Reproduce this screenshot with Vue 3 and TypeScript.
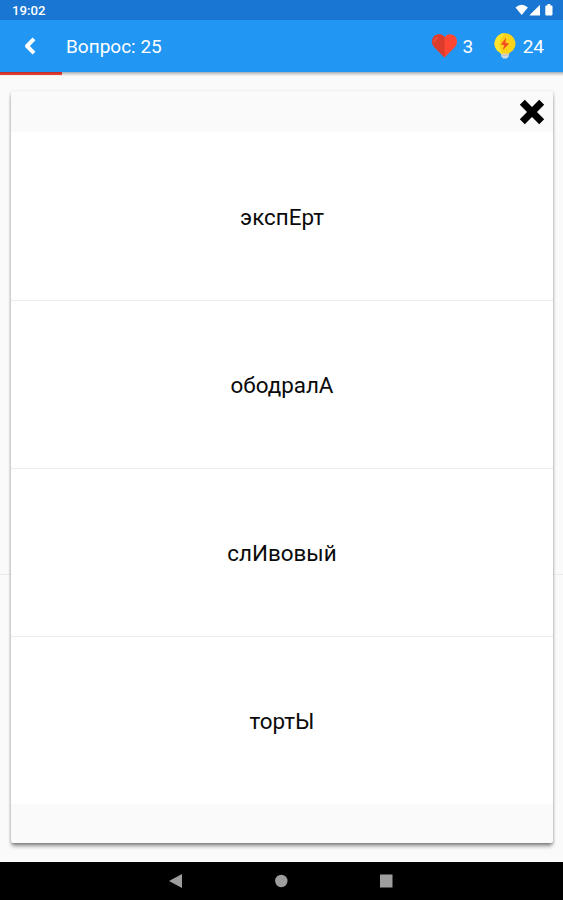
<script setup lang="ts">
import { ref } from 'vue'

const question = ref<number>(25)
const lives = ref<number>(3)
const hints = ref<number>(24)
const progress = ref<number>(11)
const answers = ref<string[]>(['экспЕрт', 'ободралА', 'слИвовый', 'тортЫ'])
</script>

<template>
  <div class="screen">
    <div class="status">
      <span class="clock">19:02</span>
      <svg class="signals" width="40" height="14" viewBox="0 0 40 14" fill="#fff">
        <path d="M0.500 3.400Q6.700-2.100 12.900 3.400L6.700 11Z" />
        <path d="M14.700 11.500V11L25 .8V11.500Z" />
        <path d="M31.200 1.400h1.300V0h2.800v1.400h1.300q.9 0 .9.800v8.400q0 .8-.8.800h-5.600q-.8 0-.8-.8V2.200q0-.8.900-.8Z" />
      </svg>
    </div>
    <header class="bar">
      <svg class="back" width="14" height="20" viewBox="0 0 14 20">
        <path d="M11 2.800 4 10l7 7.200" fill="none" stroke="#fff" stroke-width="4" stroke-linejoin="round" />
      </svg>
      <h1 class="title">Вопрос: {{ question }}</h1>
      <svg class="heart" width="26" height="24" viewBox="0 0 26 24">
        <path d="M13 23.400 2.600 13C-.7 9.300.1 2.900 4.500 1.100 8-.5 11.200.6 13 3.500 14.800.6 18-.5 21.500 1.100 25.900 2.900 26.700 9.300 23.400 13Z" fill="#ff4733" />
        <path d="M13 23.400 2.600 13C-.7 9.300.1 2.900 4.500 1.100 8-.5 11.200.6 13 3.500Z" fill="#dc3c2b" />
        <path d="M2.800 8.500Q2.900 4.500 6.500 3.300" fill="none" stroke="#ec5545" stroke-width="1.300" />
      </svg>
      <span class="count lives">{{ lives }}</span>
      <svg class="bulb" width="22" height="26" viewBox="0 0 22 26">
        <path d="M7 19h8v4l-2.200 2.500H9.200L7 23Z" fill="#d3dade" />
        <path d="M7 22.200h8" stroke="#a9b5bb" stroke-width="0.800" />
        <path d="M11 .3a10.400 10.400 0 0 1 8.100 16.900C17.600 18.700 15.800 19.200 15 20.800H7C6.200 19.200 4.400 18.700 2.900 17.200A10.400 10.400 0 0 1 11 .3Z" fill="#fbd31a" />
        <path d="M11 .3a10.400 10.400 0 0 0-8.100 16.900C4.400 18.700 6.200 19.200 7 20.800H9C4 14 4 7 11 .3Z" fill="#ffe52e" />
        <path d="M12 4.500 6.800 11.500l3.400.8-1.400 4.900 6.400-6.600-3.700-.8Z" fill="#f4511e" />
      </svg>
      <span class="count">{{ hints }}</span>
    </header>
    <div class="track"><div class="fill" :style="{ width: progress + '%' }"></div></div>

    <main class="page">
      <section class="card">
        <div class="card-head">
          <svg width="26" height="26" viewBox="0 0 26 26">
            <path d="M3.300 3.300 22.700 22.700M22.700 3.300 3.300 22.700" stroke="#000" stroke-width="7" />
          </svg>
        </div>
        <ul class="answers">
          <li v-for="answer in answers" :key="answer" class="answer">{{ answer }}</li>
        </ul>
        <div class="card-foot"></div>
      </section>
    </main>

    <nav class="nav">
      <svg width="14" height="14" viewBox="0 0 14 14"><path d="M0 7 13 0v14Z" fill="#9e9e9e" /></svg>
      <svg width="14" height="14" viewBox="0 0 14 14"><circle cx="7.300" cy="7" r="6.200" fill="#9e9e9e" /></svg>
      <svg width="14" height="14" viewBox="0 0 14 14"><path d="M1 .5h12.500v13H1Z" fill="#9e9e9e" /></svg>
    </nav>
  </div>
</template>

<style>
body {
  margin: 0;
}
</style>

<style scoped>
.screen {
  width: 563px;
  height: 900px;
  display: flex;
  flex-direction: column;
  overflow: hidden;
  background: #fafafa;
  font-family: Roboto, sans-serif;
}
.status {
  height: 20px;
  flex: none;
  box-sizing: border-box;
  display: flex;
  justify-content: space-between;
  padding: 0 8px 0 12px;
  background: #1976d2;
  color: #fff;
}
.clock {
  font-size: 13.2px;
  font-weight: 500;
  line-height: 22px;
}
.signals {
  margin-top: 4px;
}
.bar {
  height: 52px;
  flex: none;
  box-sizing: border-box;
  display: flex;
  align-items: center;
  padding: 0 19px 0 23px;
  background: #2196f3;
  color: #fff;
}
.back {
  margin-right: 29px;
}
.title {
  margin: 1px auto 0 0;
  font-size: 19px;
  font-weight: 400;
  line-height: 24px;
}
.heart {
  margin-right: 5px;
}
.count {
  font-size: 19px;
  line-height: 24px;
  margin-top: 1px;
}
.lives {
  margin-right: 20px;
}
.bulb {
  margin-right: 7px;
}
.heart,
.lives {
  transform: translateX(-0.4px);
}
.track {
  height: 4px;
  flex: none;
  background: linear-gradient(#9eabb4, #d0d1d2 45%, #f6f6f6);
}
.fill {
  height: 3px;
  background: linear-gradient(#b92d27, #f44336);
}
.page {
  flex: 1;
  padding: 15px 10px 0 11px;
  background: linear-gradient(#ebebeb, #ebebeb) 0 498px / 100% 1px no-repeat;
}
.card {
  height: 752px;
  display: flex;
  flex-direction: column;
  border-radius: 2px;
  background: #fafafa;
  box-shadow: 0 1px 3px rgba(0, 0, 0, 0.26), 0 4px 4px -1px rgba(0, 0, 0, 0.4);
}
.card-head {
  height: 41px;
  box-sizing: border-box;
  flex: none;
  display: flex;
  justify-content: flex-end;
  padding: 8px 8px 0 0;
}
.answers {
  flex: none;
  list-style: none;
  margin: 0;
  padding: 0;
  background: #fff;
}
.answer {
  height: 168px;
  box-sizing: border-box;
  display: flex;
  align-items: center;
  justify-content: center;
  padding-top: 2px;
  font-size: 22.4px;
  line-height: 26px;
  color: #0a0a0a;
}
.answer + .answer {
  padding-top: 1px;
  border-top: 1px solid #ececec;
}
.card-foot {
  flex: 1;
}
.nav {
  height: 38px;
  flex: none;
  box-sizing: border-box;
  display: flex;
  justify-content: center;
  align-items: center;
  gap: 91px;
  padding-right: 1px;
  background: #000;
}
</style>
